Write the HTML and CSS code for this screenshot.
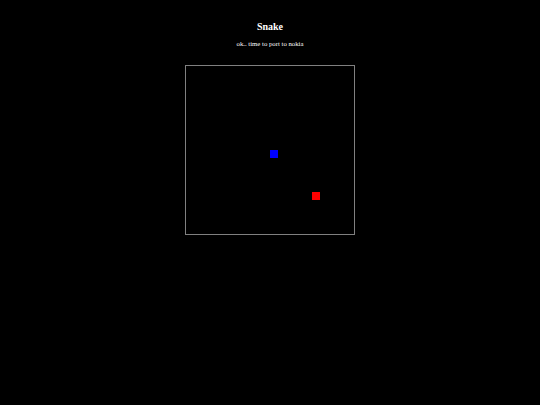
FILE: index.html
```html
<!DOCTYPE html>
<html lang="en">
<head>
    <meta charset="UTF-8">
    <meta name="viewport" content="width=device-width, initial-scale=1.0">
    <title>Snake</title>
    <link rel="stylesheet" href="styles.css">
</head>
<body>

<header>
    <h1>Snake</h1>
    <p>ok.. time to port to nokia</p>
</header>

<div class="board" id="board">
    <!-- snake head and food, placed on a 20x20 grid -->
    <div class="cell snake" style="left: 84px; top: 84px;"></div>
    <div class="cell food" style="left: 126px; top: 126px;"></div>
</div>

</body>
</html>
```

FILE: styles.css
```css
/* Global styles */
body {
    font-family: "Liberation Serif", "Times New Roman", serif;
    margin: 0;
    padding: 0;
    background-color: #000;
    color: #fff;
    text-align: center;
}
header {
    padding-top: 21px;
}
h1 {
    margin: 0;
    font-size: 10px;
    line-height: 12px;
    font-weight: bold;
}
header p {
    margin: 6px 0 0;
    font-size: 6.75px;
    line-height: 10px;
}
.board {
    position: relative;
    width: 168px;
    height: 168px;
    margin: 16px auto 0;
    border: 1px solid #808080;
}
.cell {
    position: absolute;
    width: 8px;
    height: 8px;
}
.snake {
    background-color: #0000ff;
}
.food {
    background-color: #ff0000;
}
```
